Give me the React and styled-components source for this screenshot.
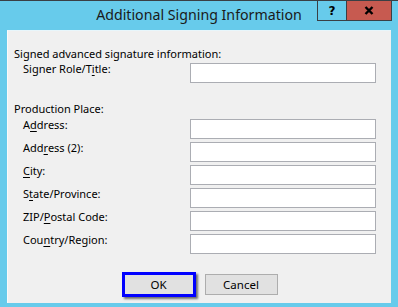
import styled, { createGlobalStyle } from 'styled-components';

const GlobalStyle = createGlobalStyle`
  body {
    margin: 0;
    background: #67cbeb;
    overflow: hidden;
  }
`;

const Window = styled.div`
  width: 398px;
  height: 307px;
  box-sizing: border-box;
  border-top: 1px solid #3a3f44;
  background: #67cbeb;
  display: flex;
  flex-direction: column;
  font-family: 'Noto Sans', 'Open Sans', sans-serif;
`;

const TitleBar = styled.div`
  height: 29px;
  display: grid;
  grid-template-columns: 1fr auto 1fr;
  align-items: start;
`;

const Title = styled.div`
  grid-column: 2;
  font-size: 14.2px;
  line-height: 28px;
  color: #1a1a1a;
`;

const Controls = styled.div`
  grid-column: 3;
  justify-self: end;
  display: flex;
  margin-right: 6px;
`;

const CtrlButton = styled.div`
  width: ${(p) => p.w}px;
  height: 20px;
  box-sizing: border-box;
  border: 1px solid #3a3f44;
  border-top: none;
  border-left: ${(p) => (p.first ? '1px solid #3a3f44' : 'none')};
  background: ${(p) => (p.close ? '#c75a50' : '#67cbeb')};
  display: flex;
  align-items: center;
  justify-content: center;
  font-family: 'DejaVu Sans', sans-serif;
  font-weight: bold;
  font-size: 12px;
  color: #000;
`;

const Client = styled.div`
  margin: 0 7px;
  height: 273px;
  box-sizing: border-box;
  background: #f0f0f0;
  border-left: 1px solid #fafafa;
  border-top: 1px solid #e8f6fb;
  padding: 15px 0 0 6px;
  display: flex;
  flex-direction: column;
  font-size: 11px;
  color: #000;
`;

const SectionHead = styled.div`
  line-height: 16px;
  margin-top: ${(p) => p.top || 0}px;
`;

const Rows = styled.div`
  display: flex;
  flex-direction: column;
  gap: 3px;
  margin-top: ${(p) => p.top || 0}px;
`;

const Row = styled.div`
  display: grid;
  grid-template-columns: 176px 186px;
  height: 20px;
`;

const Label = styled.label`
  padding-left: 9px;
  line-height: 14px;
  margin-top: -1px;
  white-space: nowrap;
  u {
    text-decoration-thickness: 1px;
    text-underline-offset: 2px;
  }
`;

const Field = styled.input`
  box-sizing: border-box;
  width: 186px;
  height: 20px;
  border: 1px solid #abadb3;
  background: #fff;
  margin: 0;
  outline: none;
`;

const Footer = styled.div`
  display: flex;
  justify-content: center;
  align-items: center;
  gap: 9px;
  margin-top: 18px;
  margin-left: -6px;
`;

const Button = styled.button`
  box-sizing: border-box;
  width: ${(p) => (p.primary ? 74 : 73)}px;
  height: ${(p) => (p.primary ? 25 : 21)}px;
  background: #e1e1e1;
  border: ${(p) => (p.primary ? '3px solid #0000ff' : '1px solid #adadad')};
  box-shadow: ${(p) => (p.primary ? '2px 2px 2px rgba(0, 0, 0, 0.55)' : 'none')};
  font-family: inherit;
  font-size: 11.5px;
  color: #000;
  padding: 0;
`;

const fields = [
  ['A', 'd', 'dress:'],
  ['Add', 'r', 'ess (2):'],
  ['', 'C', 'ity:'],
  ['S', 't', 'ate/Province:'],
  ['ZIP/', 'P', 'ostal Code:'],
  ['Cou', 'n', 'try/Region:'],
];

function CloseGlyph() {
  return (
    <svg width="10" height="9" viewBox="0 0 10 9">
      <path d="M1.5 1 L8.5 8 M8.5 1 L1.5 8" stroke="#000" strokeWidth="2.4" />
    </svg>
  );
}

export default function App() {
  return (
    <>
      <GlobalStyle />
      <Window>
        <TitleBar>
          <Title>Additional Signing Information</Title>
          <Controls>
            <CtrlButton w={30} first>?</CtrlButton>
            <CtrlButton w={45} close>
              <CloseGlyph />
            </CtrlButton>
          </Controls>
        </TitleBar>
        <Client>
          <SectionHead>Signed advanced signature information:</SectionHead>
          <Rows top={1}>
            <Row>
              <Label>
                Signer Role/T<u>i</u>tle:
              </Label>
              <Field />
            </Row>
          </Rows>
          <SectionHead top={18}>Production Place:</SectionHead>
          <Rows top={2}>
            {fields.map(([a, k, b]) => (
              <Row key={a + k + b}>
                <Label>
                  {a}
                  <u>{k}</u>
                  {b}
                </Label>
                <Field />
              </Row>
            ))}
          </Rows>
          <Footer>
            <Button primary>OK</Button>
            <Button>Cancel</Button>
          </Footer>
        </Client>
      </Window>
    </>
  );
}
